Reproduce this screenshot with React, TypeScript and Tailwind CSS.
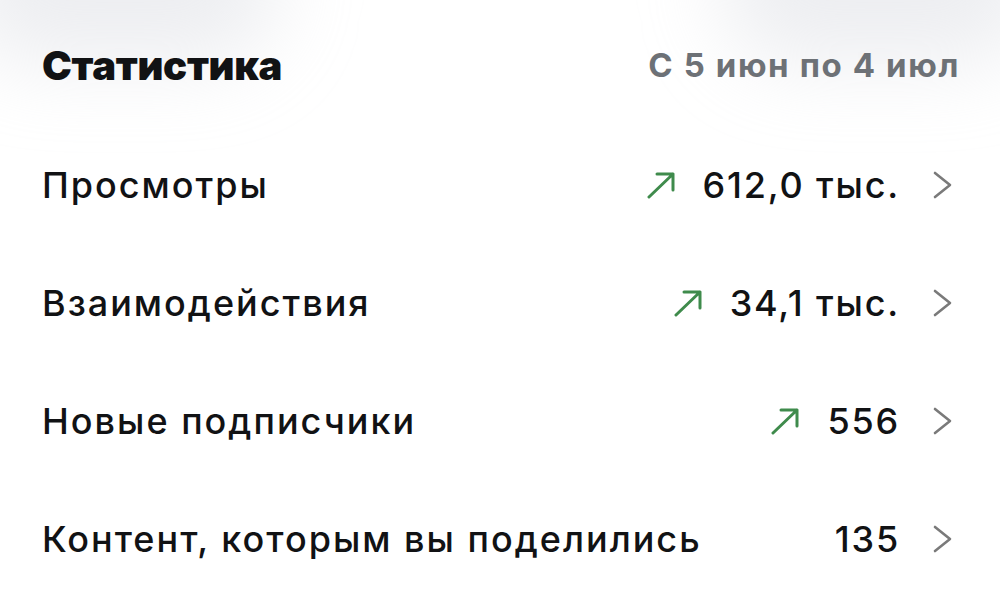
type StatRow = {
  label: string
  value: string
  trend?: boolean
}

const rows: StatRow[] = [
  { label: 'Просмотры', value: '612,0 тыс.', trend: true },
  { label: 'Взаимодействия', value: '34,1 тыс.', trend: true },
  { label: 'Новые подписчики', value: '556', trend: true },
  { label: 'Контент, которым вы поделились', value: '135' },
]

function TrendUp() {
  return (
    <svg width="30" height="28" viewBox="0 0 30 28" fill="none" className="mr-[27px] text-[#3f8b4c]">
      <path d="M3 26 L27 3 M11 3 H27 V19" stroke="currentColor" strokeWidth="3" strokeLinecap="round" strokeLinejoin="round" />
    </svg>
  )
}

function Chevron() {
  return (
    <svg width="22" height="28" viewBox="0 0 22 28" fill="none" className="ml-[32px] text-[#7a7a7a]">
      <path d="M3 2 L18 14 L3 26" stroke="currentColor" strokeWidth="2.6" strokeLinecap="round" strokeLinejoin="round" />
    </svg>
  )
}

export default function App() {
  return (
    <div
      className="relative h-[602px] w-[1000px] overflow-hidden bg-white text-[#111214]"
      style={{ fontFamily: 'Inter, "Liberation Sans", sans-serif' }}
    >
      <div className="pointer-events-none absolute -left-10 -top-24 h-40 w-80 rounded-full bg-gray-300/40 blur-2xl" />
      <div className="pointer-events-none absolute -right-10 -top-24 h-40 w-80 rounded-full bg-gray-300/40 blur-2xl" />

      <div className="relative flex flex-col pl-[42px] pr-[46px] pt-[38px]">
        <div className="-mr-[6px] flex h-[56px] items-center justify-between">
          <h2 className="text-[40px] font-black tracking-[-0.3px]">Статистика</h2>
          <span className="text-[33px] font-bold tracking-[1.6px] text-[#6d7176]">С 5 июн по 4 июл</span>
        </div>

        <div className="mt-[32px] flex flex-col">
          {rows.map((r) => (
            <div key={r.label} className="flex h-[118px] items-center justify-between">
              <span className="text-[36px] font-medium tracking-[2px]">{r.label}</span>
              <div className="flex items-center">
                {r.trend && <TrendUp />}
                <span className="text-[36px] font-medium tracking-[1.8px]">{r.value}</span>
                <Chevron />
              </div>
            </div>
          ))}
        </div>
      </div>
    </div>
  )
}
